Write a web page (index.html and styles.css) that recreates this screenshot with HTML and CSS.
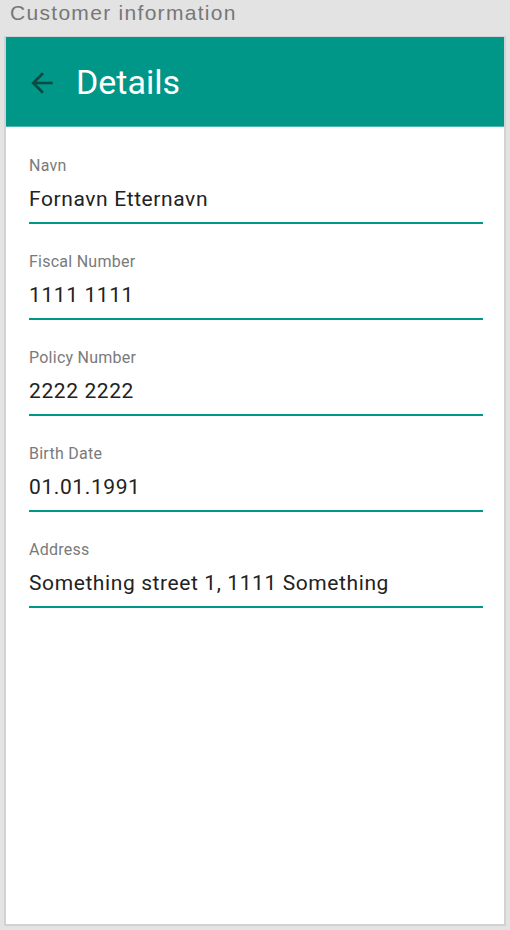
FILE: index.html
```html
<!DOCTYPE html>
<html>
<head>
<meta charset="utf-8">
<link rel="stylesheet" href="styles.css">
</head>
<body>
<div class="page-title">Customer information</div>
<div class="frame">
  <header class="appbar">
    <svg class="back" viewBox="0 0 24 24" width="32" height="32"><path d="M20 11H7.83l5.59-5.59L12 4l-8 8 8 8 1.41-1.41L7.83 13H20v-2z"/></svg>
    <h1 class="appbar-title">Details</h1>
  </header>
  <main class="fields">
    <div class="field"><div class="label">Navn</div><div class="value">Fornavn Etternavn</div></div>
    <div class="field"><div class="label">Fiscal Number</div><div class="value">1111 1111</div></div>
    <div class="field"><div class="label">Policy Number</div><div class="value">2222 2222</div></div>
    <div class="field"><div class="label">Birth Date</div><div class="value">01.01.1991</div></div>
    <div class="field"><div class="label">Address</div><div class="value">Something street 1, 1111 Something</div></div>
  </main>
</div>
</body>
</html>
```
FILE: styles.css
```css
html, body {
  margin: 0;
  padding: 0;
  background: #e3e3e3;
  font-family: Roboto, "Noto Sans", sans-serif;
}
.page-title {
  height: 36px;
  box-sizing: border-box;
  padding: 0 0 0 10px;
  font-family: "Liberation Sans", Arial, sans-serif;
  font-size: 21px;
  line-height: 25px;
  letter-spacing: 1.3px;
  color: #777777;
}
.frame {
  margin: 0 4px;
  height: 890px;
  box-sizing: border-box;
  border: 2px solid #d2d2d2;
  border-top-width: 1px;
  background: #ffffff;
  display: flex;
  flex-direction: column;
}
.appbar {
  height: 89px;
  background: #009688;
  border-bottom: 1px solid #4db6ac;
  display: flex;
  align-items: center;
  padding-left: 20px;
  gap: 18px;
}
.back {
  fill: #0b4a42;
  margin-top: 3px;
}
.appbar-title {
  margin: 0;
  font-weight: 400;
  font-size: 34px;
  color: #ffffff;
  line-height: 40px;
}
.fields {
  padding: 29px 21px 0 23px;
}
.field {
  border-bottom: 2px solid #009688;
  padding-bottom: 9px;
  margin-bottom: 28px;
}
.label {
  font-size: 16px;
  line-height: 20px;
  letter-spacing: 0.25px;
  color: #7a7a7a;
  margin-bottom: 9px;
}
.value {
  font-size: 21px;
  line-height: 28px;
  letter-spacing: 0.6px;
  color: #222222;
}
```
